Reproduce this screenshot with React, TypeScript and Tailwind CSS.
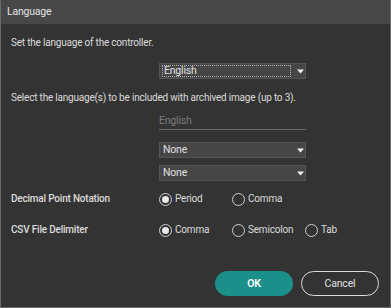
import React from "react";

const font = { fontFamily: 'Roboto, "Noto Sans", sans-serif', letterSpacing: "-0.2px" };

const Arrow = () => (
  <svg width="7" height="5" viewBox="0 0 7 5" className="shrink-0">
    <path d="M0 0.5H7L3.5 4.5Z" fill="#f2f2f2" />
  </svg>
);

const Select = ({ value, focused }: { value: string; focused?: boolean }) => (
  <div className="ml-[148px] w-[147px] h-[16px] bg-[#464646] border border-[#555] flex items-center pl-[2px]">
    <div
      className={
        "flex-1 mr-[5px] h-[12px] flex items-center pl-[1px] text-[10.5px] leading-none text-[#e0e0e0] " +
        (focused ? "border border-dotted border-[#b0b0b0]" : "")
      }
    >
      {value}
    </div>
    <div className="w-[9px] flex justify-center">
      <Arrow />
    </div>
  </div>
);

const Radio = ({ label, checked, w }: { label: string; checked?: boolean; w: string }) => (
  <div className={"flex items-center gap-[3px] " + w}>
    <div className="w-[13px] h-[13px] rounded-full border border-[#d0d0d0] flex items-center justify-center">
      {checked && <div className="w-[7px] h-[7px] rounded-full bg-[#e8e8e8]" />}
    </div>
    <span className="text-[10px] leading-[14px] text-[#dcdcdc]">{label}</span>
  </div>
);

export default function App() {
  return (
    <div
      style={font}
      className="w-[391px] h-[308px] bg-[#333333] border-x border-b border-[#6b6b6b] flex flex-col"
    >
      <div className="h-[24px] bg-[#474747] px-[6px] flex items-center text-[10.5px] text-[#e4e4e4]">
        Language
      </div>
      <div className="px-[10px] flex flex-col text-[#dcdcdc]">
        <p className="mt-[12px] text-[10px] leading-[14px]">Set the language of the controller.</p>
        <div className="mt-[13px]">
          <Select value="English" focused />
        </div>
        <p className="mt-[12px] text-[10px] leading-[14px]">
          Select the language(s) to be included with archived image (up to 3).
        </p>
        <div className="mt-[9px] ml-[148px] w-[147px] h-[16px] border-b border-[#6a6a6a] text-[10.5px] leading-[14px] text-[#7a7a7a]">
          English
        </div>
        <div className="mt-[12px]">
          <Select value="None" />
        </div>
        <div className="mt-[7px]">
          <Select value="None" />
        </div>
        <div className="mt-[11px] flex items-center">
          <span className="w-[148px] text-[10px] leading-[14px] font-medium">Decimal Point Notation</span>
          <Radio label="Period" checked w="w-[73px]" />
          <Radio label="Comma" w="w-[73px]" />
        </div>
        <div className="mt-[17px] flex items-center">
          <span className="w-[148px] text-[10px] leading-[14px] font-medium">CSV File Delimiter</span>
          <Radio label="Comma" checked w="w-[73px]" />
          <Radio label="Semicolon" w="w-[73px]" />
          <Radio label="Tab" w="w-[40px]" />
        </div>
        <div className="mt-[34px] flex justify-end gap-[8px] pr-[1px]">
          <button className="w-[78px] h-[25px] rounded-full bg-[#1b8f8a] text-white text-[10.5px] font-semibold">
            OK
          </button>
          <button className="w-[78px] h-[25px] rounded-full border-[1.5px] border-[#dcdcdc] text-[#e0e0e0] text-[10.5px]">
            Cancel
          </button>
        </div>
      </div>
    </div>
  );
}
